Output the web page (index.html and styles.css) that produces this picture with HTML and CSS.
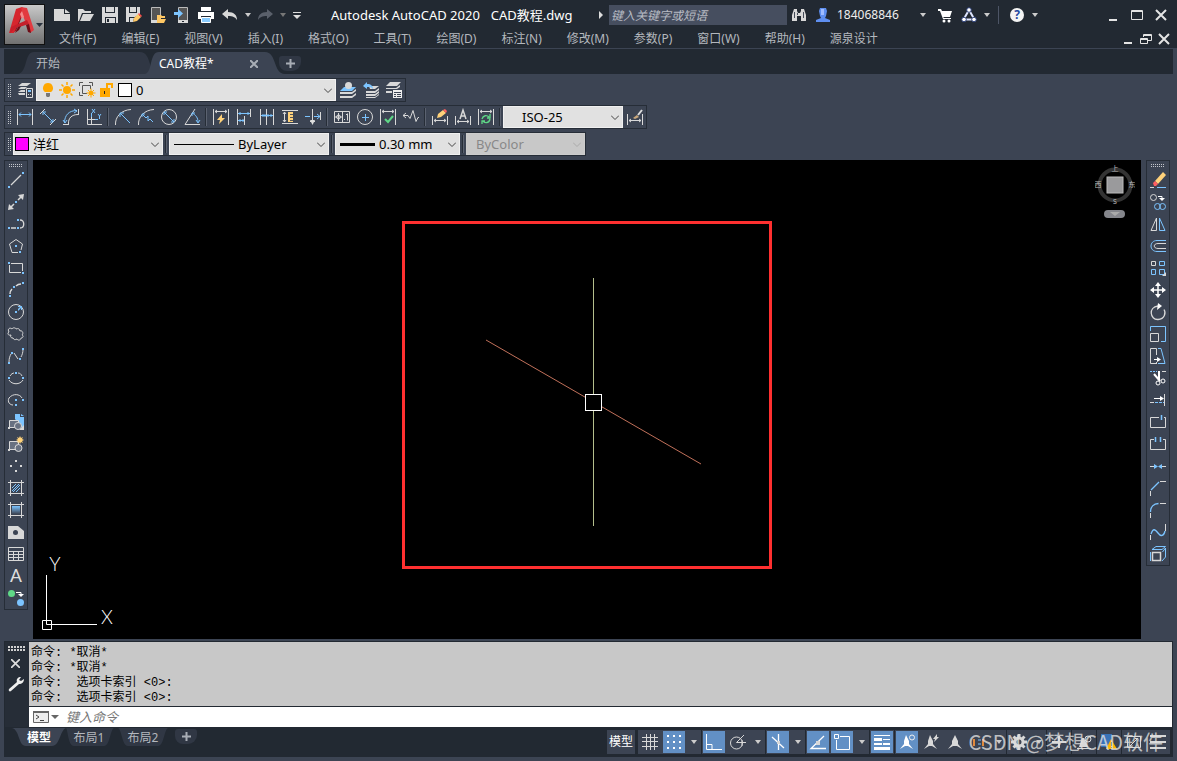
FILE: index.html
```
<!DOCTYPE html>
<html lang="zh-CN">
<head>
  <meta charset="UTF-8">
  <meta name="viewport" content="width=device-width, initial-scale=1">
  <title>Autodesk AutoCAD 2020 CAD教程.dwg</title>
  <link rel="stylesheet" href="styles.css">
</head>
<body>
  <header class="app-header">
    <button class="app-button" aria-label="应用程序菜单">
      <svg width="39" height="39" viewBox="0 0 39 39">
        <path fill="#8d1420" d="M13 5l8-1 3 12-6-7-7 17-4 2z"/>
        <path fill="#d6262e" d="M11 4l6-2 3 3-5 9-6 14-5 0z"/>
        <path fill="#e23a40" d="M16 2l6 1 7 22-4 3-7-17z"/>
        <path fill="#f4898b" d="M15 9l2-3 2 6-2 2z"/>
        <path fill="#c51f2a" d="M6 22l16-7 2 4-13 4-6 5z"/>
        <path fill="#6d0d16" d="M10 28l3-6 3-1-2 4zM21 20l3-1 2 9-3-1z"/>
        <path fill="#2c3440" d="M31 18h7l-3.500 4z"/>
      </svg>
    </button>

    <div class="title-row">
      <div class="quick-access">
        <button aria-label="新建"><svg class="ic solid" viewBox="0 0 16 16"><path d="M0 2h10v5h6v7H0z"/><path d="M11 2l5 4h-5z"/></svg></button>
        <button aria-label="打开"><svg class="ic solid" viewBox="0 0 16 16"><path d="M0 2h5l2 2h6v2H4L1 14H0z"/><path d="M5 7h11l-4 7H2z"/></svg></button>
        <button aria-label="保存"><svg class="ic solid" viewBox="0 0 16 16"><path d="M0 0h3v6h10V0h3v16h-2v-6H3v6H0z"/><path d="M4 0h8v5H4zM4 11h9v5H4z"/><path fill="#222932" d="M5 12h2v3H5z"/></svg></button>
        <button aria-label="另存为"><svg class="ic solid" viewBox="0 0 16 16"><path d="M0 0h3v6h8V0h3v7l-5 3H3v5H0z"/><path d="M4 0h6v5H4zM4 11h4l-1 4H4z"/><path fill="#ffc864" d="M7 15l1-4 4-4 3 3-4 4z"/><path fill="#ff4d4d" d="M12 7l1-1 3 3-1 1z"/></svg></button>
        <button aria-label="从移动设备打开"><svg class="ic solid" viewBox="0 0 16 16"><path fill="#555" stroke="#bbb" d="M1.500.5h9v15h-9z"/><path d="M1 13h7v3H1z"/><path fill="#ffc864" d="M7 8h4l1 1h3v2h-4l-2 5H7zM10 12h6l-2 4H8z"/></svg></button>
        <button aria-label="保存到移动设备"><svg class="ic solid" viewBox="0 0 16 16"><path fill="#555" stroke="#bbb" d="M4.500.5h9v15h-9z"/><path d="M4 13h10v3H4z"/><path fill="#222932" d="M8 14h2v1H8z"/><path fill="#7cc4ff" d="M0 5h4V2l5 4.500L4 11V8H0z"/></svg></button>
        <button aria-label="打印"><svg class="ic solid" viewBox="0 0 16 16"><path fill="#fff" d="M3 0h10v4H3zM0 5h16v7h-3V9H3v3H0z"/><path fill="#8accff" stroke="#fff" d="M3.500 10.500h9v5h-9z"/></svg></button>
        <button aria-label="放弃"><svg class="ic solid" viewBox="0 0 16 16"><path d="M0 7l6-5v3c6 0 9 3 9 8-2-3-4-4-9-4v3z"/></svg></button>
        <button class="drop" aria-label="放弃列表"><svg class="caret" viewBox="0 0 6 4"><path d="M0 0h6L3 4z"/></svg></button>
        <button aria-label="重做"><svg class="ic solid off" viewBox="0 0 16 16"><path d="M16 7l-6-5v3c-6 0-9 3-9 8 2-3 4-4 9-4v3z"/></svg></button>
        <button class="drop" aria-label="重做列表"><svg class="caret off" viewBox="0 0 6 4"><path d="M0 0h6L3 4z"/></svg></button>
        <button class="more" aria-label="自定义快速访问工具栏"><svg width="8" height="7" viewBox="0 0 8 7"><path fill="#ddd" d="M0 0h8v1H0zM0 3h8L4 7z"/></svg></button>
      </div>
      <h1 class="title"><span>Autodesk AutoCAD 2020</span><span>CAD教程.dwg</span></h1>
      <svg class="arrow" viewBox="0 0 4 8"><path d="M0 0l4 4-4 4z"/></svg>
      <input class="search" type="text" placeholder="键入关键字或短语" aria-label="搜索">
      <div class="account">
        <button aria-label="搜索"><svg class="ic solid" viewBox="0 0 16 16"><path d="M3 2h3v2l1 2h2l1-2V2h3l2 6v6h-5V9H6v5H1V8z"/><path fill="#444b58" d="M3 5h1v6H3zM12 5h1v6h-1zM6 6h1v2H6z"/></svg></button>
        <button aria-label="登录"><svg class="ic solid" viewBox="0 0 16 16"><path fill="#5f8ff0" d="M5 1h6l1 3-1 5-1 2 5 2v2H1v-2l5-2-1-2-1-5z"/><path fill="#9fbcff" d="M6 2h3v6H6z"/></svg></button>
        <span class="user">184068846</span>
        <button class="drop" aria-label="帐户"><svg class="caret" viewBox="0 0 6 4"><path d="M0 0h6L3 4z"/></svg></button>
        <button class="cart" aria-label="商店"><svg class="ic solid" viewBox="0 0 16 16"><path fill="#fff" d="M1 2h3l1 2h10l-2 6H6l1 1h7v1H6L3 4H1z"/><circle fill="#fff" cx="7" cy="14" r="1.500"/><circle fill="#fff" cx="12" cy="14" r="1.500"/></svg></button>
        <button aria-label="Autodesk App"><svg class="ic" viewBox="0 0 16 16"><path stroke="#dfe6ff" stroke-width="2" d="M8 3L2.500 12.500h11z"/><circle fill="#fff" stroke="#2b3e78" cx="8" cy="3" r="2.300"/><circle fill="#fff" stroke="#2b3e78" cx="3" cy="12.500" r="2.300"/><circle fill="#fff" stroke="#2b3e78" cx="13" cy="12.500" r="2.300"/></svg></button>
        <button class="drop" aria-label="应用列表"><svg class="caret" viewBox="0 0 6 4"><path d="M0 0h6L3 4z"/></svg></button>
        <span class="divider"></span>
        <button class="help" aria-label="帮助">?</button>
        <button class="drop" aria-label="帮助列表"><svg class="caret" viewBox="0 0 6 4"><path d="M0 0h6L3 4z"/></svg></button>
      </div>
      <div class="window-buttons">
        <button aria-label="最小化"><svg class="ic" viewBox="0 0 16 16"><path stroke-width="2" d="M4 13h8"/></svg></button>
        <button aria-label="最大化"><svg class="ic" viewBox="0 0 16 16"><path d="M2.500 3.500h11v9h-11z"/><path d="M2 4.500h12"/></svg></button>
        <button aria-label="关闭"><svg class="ic" viewBox="0 0 16 16"><path stroke-width="2" d="M3 3l10 10M13 3L3 13"/></svg></button>
      </div>
    </div>

    <div class="menu-row">
      <nav class="menus">
        <a href="#">文件(F)</a>
        <a href="#">编辑(E)</a>
        <a href="#">视图(V)</a>
        <a href="#">插入(I)</a>
        <a href="#">格式(O)</a>
        <a href="#">工具(T)</a>
        <a href="#">绘图(D)</a>
        <a href="#">标注(N)</a>
        <a href="#">修改(M)</a>
        <a href="#">参数(P)</a>
        <a href="#">窗口(W)</a>
        <a href="#">帮助(H)</a>
        <a href="#">源泉设计</a>
      </nav>
      <div class="window-buttons small">
        <button aria-label="最小化文档"><svg class="ic" viewBox="0 0 16 16"><path stroke-width="2" d="M4 12h8"/></svg></button>
        <button aria-label="还原文档"><svg class="ic" viewBox="0 0 16 16"><path d="M5.500 6V3.500h8v6H10M5 4.500h8"/><path d="M2.500 7.500h7v5h-7zM2 8.500h8"/></svg></button>
        <button aria-label="关闭文档"><svg class="ic" viewBox="0 0 16 16"><path stroke-width="2" d="M3 3l10 10M13 3L3 13"/></svg></button>
      </div>
    </div>
  </header>

  <nav class="file-tabs">
    <a class="file-tab" href="#">
      <svg viewBox="0 0 140 22" preserveAspectRatio="none"><path d="M0 22C10 20 6 0 16 0H122C134 0 130 22 140 22z"/></svg>
      <span>开始</span>
    </a>
    <a class="file-tab active" href="#">
      <svg viewBox="0 0 140 22" preserveAspectRatio="none"><path d="M0 22C8 20 4 0 14 0H120C132 0 128 22 140 22z"/></svg>
      <span>CAD教程*</span>
      <svg class="tab-close" viewBox="0 0 8 8"><path d="M0 0l8 8M8 0L0 8"/></svg>
    </a>
    <button class="tab-add" aria-label="新图形"><svg viewBox="0 0 9 9"><path d="M4.500 0v9M0 4.500h9"/></svg></button>
  </nav>

  <div class="toolbars">
    <div class="toolbar">
      <span class="grip"></span>
      <button aria-label="图层特性"><svg class="ic solid" viewBox="0 0 16 16"><path d="M5 1h9l-4 3H1zM4 5h6l-2 2H1zM4 8h4v2H1z M1 11h7v2H2z"/><path fill="#3c4453" stroke="#ddd" d="M9.500 6.500h6v9h-6z"/><path fill="#7cc4ff" d="M11 8h3v2h-3z"/><path d="M11 12h1v1h-1zM13 12h1v1h-1z"/></svg></button>
      <div class="combo layer">
        <svg class="ic solid" viewBox="0 0 16 16"><path fill="#ffa800" d="M8 1a5 5 0 0 1 3 9H5a5 5 0 0 1 3-9z"/><path fill="#777" d="M6 11h4v3l-1 1H7l-1-1z"/></svg>
        <svg class="ic" viewBox="0 0 16 16"><circle fill="#ffa800" stroke="none" cx="8" cy="8" r="4"/><path stroke="#ffa800" stroke-width="1.500" d="M8 0v3M8 13v3M0 8h3M13 8h3M2.500 2.500l2 2M11.500 11.500l2 2M2.500 13.500l2-2M11.500 4.500l2-2"/></svg>
        <svg class="ic wide" viewBox="0 0 18 16"><path stroke="#555" d="M1.500 4V.5H5M11 .5h3.500V4M1.500 10v3.500H5M4.500 3.500h8v8h-8z"/><circle fill="#e1e1e1" stroke="none" cx="13" cy="11" r="4"/><circle fill="#ffa800" stroke="none" cx="13" cy="11" r="2.500"/><path stroke="#ffa800" d="M13 6.500v2M13 13.500v2M8.500 11h2M15.500 11h2M10 8l1 1M15 13l1 1M10 14l1-1M15 9l1-1"/></svg>
        <svg class="ic" viewBox="0 0 16 16"><path fill="#ffa800" stroke="none" d="M1 6h10v9H1z"/><path stroke="#ffa800" stroke-width="2" d="M8 7V2h5v4"/><path fill="#222" stroke="none" d="M5 9h1v3H5z"/></svg>
        <span class="swatch white"></span>
        <select aria-label="图层"><option>0</option></select>
        <svg class="chevron" viewBox="0 0 8 5"><path d="M0 .5l4 4 4-4"/></svg>
      </div>
      <button aria-label="将对象的图层置为当前"><svg class="ic solid" viewBox="0 0 16 16"><path fill="#7cc4ff" d="M4 5h12l-4 4H0z"/><circle cx="8.500" cy="3.500" r="3.500"/><path d="M0 10h12l4-3v2l-4 3H0zM0 14h12l4-3v2l-4 3H0z"/></svg></button>
      <button aria-label="上一个图层"><svg class="ic solid" viewBox="0 0 16 16"><path d="M6 4h10l-4 3H7zM3 9h9l4-3v2l-4 3H3zM3 12h9l4-3v2l-4 3H3zM3 15h9l4-3v1l-4 3H3z"/><path fill="#7cc4ff" d="M0 4l4-4v2c4 0 6 2 6 5-2-2-3-2-6-2v2z"/></svg></button>
      <button aria-label="图层状态管理器"><svg class="ic solid" viewBox="0 0 16 16"><path d="M4 0h11l-4 4H0zM0 6h10l4-3v2l-3 2H0zM0 9h6v2H0z"/><path fill="#eee" d="M7 8h9v8H7z"/><path fill="#3c4453" d="M8 10h7v1H8zM8 12h2v1H8zM11 12h4v1h-4zM8 14h2v1H8zM11 14h4v1h-4z"/></svg></button>
    </div>

    <div class="toolbar">
      <span class="grip"></span>
      <button aria-label="线性"><svg class="ic" viewBox="0 0 16 16"><path d="M.5 0v16M15.500 0v16"/><path class="b" d="M2 5.500h12M4 3.500l-2 2 2 2M12 3.500l2 2-2 2"/></svg></button>
      <button aria-label="对齐"><svg class="ic" viewBox="0 0 16 16"><path d="M0 5l5-5M10 16l6-6"/><path class="b" d="M3 3l10 10M3 6V3h3M13 10v3h-3"/></svg></button>
      <button aria-label="弧长"><svg class="ic" viewBox="0 0 16 16"><path d="M0 15.500h6M15.500 0v6M5.500 15C5 9 9 5.500 15 5.500"/><path class="b" d="M1.500 14C1.500 6 6 1.500 14 1.500M0 11l2 3 2-3M11 0l3 2-3 2"/></svg></button>
      <button aria-label="坐标"><svg class="ic" viewBox="0 0 16 16"><path d="M1.500 0v15.500H16M5.500 5v11M1 10.500h8"/><path class="b" d="M6 0l3 4M9 0L6 4M12 5l1.500 2L15 5M13.500 7v3M9 10.500h3M5.500 4v4"/></svg></button>
      <span class="sep"></span>
      <button aria-label="半径"><svg class="ic" viewBox="0 0 16 16"><path d="M.5 16C0 8 6 1 16 .5"/><path class="b" d="M5 4l10 10M5 8V4h4"/></svg></button>
      <button aria-label="折弯"><svg class="ic" viewBox="0 0 16 16"><path d="M.5 16C0 8 6 1 16 .5"/><path class="b" d="M4 5l4 4 2-2 0 5 2-2 3 3M4 8V5h3"/></svg></button>
      <button aria-label="直径"><svg class="ic" viewBox="0 0 16 16"><circle cx="8" cy="8" r="7.500"/><path class="b" d="M3 3l10 10M3 6V3h3M13 10v3h-3"/></svg></button>
      <button aria-label="角度"><svg class="ic" viewBox="0 0 16 16"><path d="M16 15.500H1L11 0"/><path class="b" d="M8 4c4 2 6 5 6 9M8 7V4h3M12 11l2 3 2-3"/></svg></button>
      <span class="sep"></span>
      <button aria-label="快速标注"><svg class="ic" viewBox="0 0 16 16"><path d="M.5 0v16M15.500 0v16M2 2.500h12M4 1L2 2.500 4 4M12 1l2 1.500L12 4"/><path fill="#ffd27a" stroke="none" d="M9 5L4 11h3l-1 4 6-6H9z"/></svg></button>
      <button aria-label="基线"><svg class="ic" viewBox="0 0 16 16"><path d="M1.500 0v16M8.500 7v9M14.500 0v8"/><path class="b" d="M2 4.500h12M12 3v3M4 3v3M2 11.500h6M4 10v3M7 10v3"/></svg></button>
      <button aria-label="连续"><svg class="ic" viewBox="0 0 16 16"><path d="M1.500 0v16M7.500 0v16M14.500 0v16"/><path class="b" d="M2 6.500h12M4 5v3M6 5v3M9 5v3M12 5v3"/></svg></button>
      <button aria-label="等距标注"><svg class="ic" viewBox="0 0 16 16"><path d="M0 1.500h16M0 14.500h16M2.500 3v10M1 5l1.500-2L4 5M1 11l1.500 2L4 11"/><path fill="#ffd27a" stroke="none" d="M6 3h5v10H6z"/><path stroke="#555" d="M8 5.500h3M8 8.500h3M8 11.500h3"/></svg></button>
      <button aria-label="折断标注"><svg class="ic" viewBox="0 0 16 16"><path d="M7.500 0v14M15.500 3v8M5 12.500h5"/><path class="b" d="M0 7.500h5M9 7.500h6M12 5l3 2.500-3 2.500"/><path fill="#ddd" stroke="none" d="M5 11h5l-2.500 5z"/></svg></button>
      <span class="sep"></span>
      <button aria-label="公差"><svg class="ic" viewBox="0 0 16 16"><path d="M.5 2.500h15v11H.5zM8.500 3v10M1 8h7M4.500 4v8M10 10.500h1M13.500 4.500v7M12 5.500h1"/><circle cx="4.500" cy="8" r="2"/></svg></button>
      <button aria-label="圆心标记"><svg class="ic" viewBox="0 0 16 16"><circle cx="8" cy="8" r="7.500"/><path class="b" d="M8.500 5v7M5 8.500h7"/></svg></button>
      <button aria-label="检验"><svg class="ic" viewBox="0 0 16 16"><path d="M.5 0v16M15.500 0v16M2 2.500h12M4 1L2 2.500 4 4M12 1l2 1.500L12 4"/><path stroke="#5fd887" stroke-width="2" d="M5 10l3 3 5-6"/></svg></button>
      <button aria-label="折弯线性"><svg class="ic" viewBox="0 0 16 16"><path d="M0 6.500h5l2 3 3-8 3 11 2-4h1M3 4L0 6.500 3 9"/></svg></button>
      <span class="sep"></span>
      <button aria-label="编辑标注"><svg class="ic" viewBox="0 0 16 16"><path d="M.5 7v9M15.500 7v9M2 11.500h12M4 10l-2 1.500L4 13M12 10l2 1.500-2 1.500"/><path fill="#ffd27a" stroke="none" d="M5 9l1-4 5-4 3 3-5 4z"/><path fill="#ff6060" stroke="none" d="M11 1l2-1 2 2-1 2z"/></svg></button>
      <button aria-label="编辑标注文字"><svg class="ic" viewBox="0 0 16 16"><path d="M.5 7v9M15.500 7v9M2 12.500h12M4 11l-2 1.500L4 14M12 11l2 1.500-2 1.500"/><path stroke-width="1.500" d="M5 10l3-9 3 9M6 7h4"/></svg></button>
      <button aria-label="标注更新"><svg class="ic" viewBox="0 0 16 16"><path d="M.5 0v16M15.500 0v16M2 2.500h12M4 1L2 2.500 4 4M12 1l2 1.500L12 4"/><path stroke="#5fd887" stroke-width="1.300" d="M4 10c1-4 5-4 7-2M12 10c-1 5-6 4-7 2M12 5v4H9M4 15v-3h3"/></svg></button>
      <span class="sep"></span>
      <div class="combo style">
        <select aria-label="标注样式"><option>ISO-25</option></select>
        <svg class="chevron" viewBox="0 0 8 5"><path d="M0 .5l4 4 4-4"/></svg>
      </div>
      <button aria-label="标注样式管理器"><svg class="ic" viewBox="0 0 16 16"><path d="M.5 5v11M15.500 5v11M2 11.500h12M4 10l-2 1.500L4 13M12 10l2 1.500-2 1.500"/><path fill="#c9a77c" stroke="none" d="M6 9l4-3 2 2-4 2z"/><path stroke="#ddd" stroke-width="2" d="M11 6l4-5"/></svg></button>
    </div>

    <div class="toolbar">
      <span class="grip"></span>
      <div class="combo color">
        <span class="swatch magenta"></span>
        <select aria-label="颜色"><option>洋红</option></select>
        <svg class="chevron" viewBox="0 0 8 5"><path d="M0 .5l4 4 4-4"/></svg>
      </div>
      <span class="sep"></span>
      <div class="combo linetype">
        <span class="line"></span>
        <select aria-label="线型"><option>ByLayer</option></select>
        <svg class="chevron" viewBox="0 0 8 5"><path d="M0 .5l4 4 4-4"/></svg>
      </div>
      <span class="sep"></span>
      <div class="combo weight">
        <span class="line thick"></span>
        <select aria-label="线宽"><option>0.30 mm</option></select>
        <svg class="chevron" viewBox="0 0 8 5"><path d="M0 .5l4 4 4-4"/></svg>
      </div>
      <span class="sep"></span>
      <div class="combo plot disabled">
        <select aria-label="打印样式" disabled><option>ByColor</option></select>
        <svg class="chevron" viewBox="0 0 8 5"><path d="M0 .5l4 4 4-4"/></svg>
      </div>
    </div>
  </div>

  <main class="workspace">
    <div class="palette">
      <span class="grip"></span>
      <button aria-label="直线"><svg class="ic" viewBox="0 0 16 16"><path stroke-width="1.300" d="M3 13L13 3"/><path class="n" d="M0 14h2v2H0zM14 0h2v2h-2z"/></svg></button>
      <button aria-label="构造线"><svg class="ic" viewBox="0 0 16 16"><path stroke-width="1.500" d="M3 13l3-3M10 6l3-3"/><path class="s" d="M0 16l1-6 5 5zM16 0l-6 1 5 5z"/><path class="n" d="M7 7h2v2H7z"/></svg></button>
      <button aria-label="多段线"><svg class="ic" viewBox="0 0 16 16"><path stroke-width="1.300" d="M3 12h5M12 12c5 0 5-8 0-8"/><path class="n" d="M0 11h2v2H0zM9 11h2v2H9zM9 3h2v2H9z"/></svg></button>
      <button aria-label="多边形"><svg class="ic" viewBox="0 0 16 16"><path d="M10 14.500H4L1.500 6 8 1.500 14.500 6 13 12"/><path class="n" d="M7 7h2v2H7zM11 13h2v2h-2z"/></svg></button>
      <button aria-label="矩形"><svg class="ic" viewBox="0 0 16 16"><path d="M3 3.500h11.500V11M1.500 5v7.500H13"/><path class="n" d="M0 2h2v2H0zM14 12h2v2h-2z"/></svg></button>
      <button aria-label="圆弧"><svg class="ic" viewBox="0 0 16 16"><path stroke-width="1.500" d="M2 12c0-2 1-4 2-5M8 4c2-2 3-2 5-2"/><path class="n" d="M1 13h2v2H1zM5 4h2v2H5zM14 0h2v2h-2z"/></svg></button>
      <button aria-label="圆"><svg class="ic" viewBox="0 0 16 16"><circle cx="8" cy="8" r="7.500"/><path class="n" d="M7 7h2v2H7zM10 2h4v4h-1V4l-3 3v-2l2-2h-2z"/></svg></button>
      <button aria-label="修订云线"><svg class="ic" viewBox="0 0 16 16"><path d="M3 9C0 10-1 7 1 6-1 3 2 1 4 3c1-2 4-1 4 0 2-1 4 0 4 2 2-1 4 2 2 4 2 1 1 3-1 3 0 2-3 3-4 1-2 1-3 1-4-1-2 0-3-1-2-3z"/></svg></button>
      <button aria-label="样条曲线"><svg class="ic" viewBox="0 0 16 16"><path d="M1 14c0-4 1-6 2-8M6 5l4 6M13 9c1-2 2-4 2-8"/><path class="n" d="M0 14h2v2H0zM3 4h2v2H3zM11 10h2v2h-2zM14 0h2v2h-2z"/></svg></button>
      <button aria-label="椭圆"><svg class="ic" viewBox="0 0 16 16"><path d="M2 6c1-2 3-3 4-3M10 3c2 0 3 1 4 3M1 10c3 5 11 5 14 0"/><path class="n" d="M0 7h2v2H0zM7 2h2v2H7zM14 7h2v2h-2z"/></svg></button>
      <button aria-label="椭圆弧"><svg class="ic" viewBox="0 0 16 16"><path d="M14 6C12 2 5 1 1 6c-2 4 1 7 4 7"/><path class="n" d="M7 7h2v2H7zM14 7h2v2h-2zM7 12h2v2H7z"/></svg></button>
      <button aria-label="插入块"><svg class="ic" viewBox="0 0 16 16"><path class="n" d="M7 0h5v3h4v11h-2L7 5z"/><path class="n" d="M13 0l3 2h-3z"/><path fill="#687181" d="M1.500 6.500h9v7h-9z"/><circle fill="#687181" cx="10" cy="12" r="3.500"/><path class="s" d="M0 13h2v2H0zM16 11v5h-5z"/></svg></button>
      <button aria-label="创建块"><svg class="ic" viewBox="0 0 16 16"><path fill="#687181" d="M1.500 5.500h9v8h-9z"/><circle fill="#687181" cx="10.500" cy="12" r="3.500"/><path class="s" d="M0 13h2v2H0z"/><path fill="#ffd27a" stroke="none" d="M12 0l1 2 2-1-1 2 2 1-2 1 1 2-2-1-1 2-1-2-2 1 1-2-2-1 2-1-1-2 2 1z"/></svg></button>
      <button aria-label="点"><svg class="ic" viewBox="0 0 16 16"><path class="s" d="M7 2h2v2H7zM2 7h2v2H2zM12 7h2v2h-2zM7 12h2v2H7z"/></svg></button>
      <button aria-label="图案填充"><svg class="ic" viewBox="0 0 16 16"><path class="b" d="M4 8l4-4M4 11l7-7M5 12l7-7M8 12l4-4"/><path d="M0 2.500h16M0 13.500h16M2.500 0v16M13.500 0v16"/></svg></button>
      <button aria-label="渐变色"><svg class="ic" viewBox="0 0 16 16"><linearGradient id="fill" x2="0" y2="1"><stop stop-color="#7cc4ff"/><stop offset="1" stop-color="#3c4453"/></linearGradient><path fill="url(#fill)" stroke="none" d="M4 4h8v8H4z"/><path d="M0 2.500h16M0 13.500h16M2.500 0v16M13.500 0v16"/></svg></button>
      <button aria-label="面域"><svg class="ic" viewBox="0 0 16 16"><path class="s" d="M0 2h10l6 5v8H0z"/><circle fill="#3c4453" stroke="none" cx="7.500" cy="8.500" r="2.500"/></svg></button>
      <button aria-label="表格"><svg class="ic" viewBox="0 0 16 16"><path d="M.5 1.500h15v13H.5zM0 5.500h16M0 8.500h16M0 11.500h16M5.500 5v9M10.500 5v9"/></svg></button>
      <button class="mtext" aria-label="多行文字">A</button>
      <button aria-label="添加选定对象"><svg class="ic" viewBox="0 0 16 16"><circle fill="#5fd887" stroke="none" cx="3.500" cy="3.500" r="3.500"/><circle fill="#7cc4ff" stroke="none" cx="12.500" cy="12.500" r="3.500"/><path stroke="#fff" d="M8 2.500h5V5"/><path fill="#fff" stroke="none" d="M10 4h6l-3 3z"/></svg></button>
    </div>

    <div class="canvas">
      <!-- model space: selection frame, line and cursor -->
      <svg class="drawing" width="370" height="348" viewBox="0 0 370 348">
        <rect x="1.500" y="1.500" width="367" height="345" stroke="#ff3030" stroke-width="3"/>
        <path stroke="#c0705a" d="M84 119L299 243"/>
        <path stroke="#b4be8c" d="M191.500 57v116M191.500 190v115"/>
        <rect x="183.500" y="173.500" width="16" height="16" fill="#000" stroke="#fff"/>
      </svg>
      <svg class="ucs" width="80" height="90" viewBox="0 0 80 90">
        <path d="M6.500 26v49.500H57M2.500 71.500h9v9h-9z"/>
        <text x="15" y="22">Y</text>
        <text x="67" y="75">X</text>
      </svg>
      <svg class="viewcube" width="40" height="58" viewBox="0 0 40 58">
        <circle cx="20" cy="21" r="15.500" fill="none" stroke="#333" stroke-width="4"/>
        <rect x="12" y="13" width="16" height="16" fill="#9a9a9c" stroke="#bbb"/>
        <g fill="#bbb"><text x="20" y="7">上</text><text x="3" y="23">西</text><text x="37" y="23">东</text><text x="20" y="40">S</text></g>
        <rect x="9" y="46" width="21" height="8" rx="4" fill="#85868c"/>
        <path fill="#aaa" d="M15 48h10l-5 4z"/>
      </svg>
    </div>

    <div class="palette">
      <span class="grip"></span>
      <button aria-label="删除"><svg class="ic" viewBox="0 0 16 16"><path fill="#ffd27a" stroke="none" d="M5 9l8-9 3 3-8 9z"/><path fill="#ff5f62" stroke="none" d="M3 11l2-2 3 3-2 2H4z"/><path d="M0 15.500h4"/><path class="b" d="M7 15.500h9"/></svg></button>
      <button aria-label="复制"><svg class="ic" viewBox="0 0 16 16"><circle cx="3.500" cy="3.500" r="3"/><path stroke="#fff" d="M8 2.500h4V5"/><path fill="#fff" stroke="none" d="M9 4h6l-3 3z"/><circle class="b" cx="7.500" cy="12.500" r="3"/><circle class="b" cx="12.500" cy="12.500" r="3"/></svg></button>
      <button aria-label="镜像"><svg class="ic" viewBox="0 0 16 16"><path d="M6.500 2v12.500H1z"/><path class="b" d="M9.500 2v12.500H15z"/></svg></button>
      <button aria-label="偏移"><svg class="ic" viewBox="0 0 16 16"><path class="b" d="M16 2.500H7c-8 0-8 11 0 11h9"/><path d="M16 5.500H8c-5 0-5 5 0 5h8"/></svg></button>
      <button aria-label="阵列"><svg class="ic" viewBox="0 0 16 16"><path d="M1.500 1.500h4v4h-4z"/><path class="b" d="M9.500 1.500h5v4h-5zM1.500 9.500h4v5h-4zM9.500 9.500h5v5h-5z"/><path class="s" d="M16 12v4h-4z"/></svg></button>
      <button aria-label="移动"><svg class="ic" viewBox="0 0 16 16"><path stroke="#fff" stroke-width="1.500" d="M8 2v12M2 8h12"/><path fill="#fff" stroke="none" d="M8 0l3 4H5zM8 16l3-4H5zM0 8l4-3v6zM16 8l-4-3v6z"/></svg></button>
      <button aria-label="旋转"><svg class="ic" viewBox="0 0 16 16"><path stroke-width="1.300" d="M8 2C-2 3 0 16 8 15.500c7-.5 8-7 6-10"/><path fill="#fff" stroke="none" d="M8-1l4 3-5 4z"/></svg></button>
      <button aria-label="缩放"><svg class="ic" viewBox="0 0 16 16"><path class="b" d="M.5 5V.5h15v15H11"/><path d="M.5 7.500h8v8h-8z"/></svg></button>
      <button aria-label="拉伸"><svg class="ic" viewBox="0 0 16 16"><path d="M6 15.500H.5V.5h6V7M6.500 14v2"/><path class="b" d="M8 .5h3l4 15H8"/><path stroke="#fff" d="M4 11.500h4"/><path fill="#fff" stroke="none" d="M7 9l4 2.500L7 14z"/></svg></button>
      <button aria-label="修剪"><svg class="ic" viewBox="0 0 16 16"><path d="M12 1.500h4"/><path class="b" stroke-dasharray="2 1" d="M0 1.500h7"/><path stroke="#fff" stroke-width="2" d="M9 1v9M4 4l6 7"/><circle stroke="#fff" cx="8" cy="13" r="2"/><circle stroke="#fff" cx="13" cy="11" r="2"/></svg></button>
      <button aria-label="延伸"><svg class="ic" viewBox="0 0 16 16"><path d="M14.500 2v12M0 10.500h4"/><path stroke="#fff" d="M4 6.500h7"/><path fill="#fff" stroke="none" d="M10 4l4 2.500L10 9z"/><path class="b" stroke-dasharray="3 1" d="M5 10.500h9"/></svg></button>
      <button aria-label="打断于点"><svg class="ic" viewBox="0 0 16 16"><path d="M9 3.500H.5v10h15v-10H14"/><path class="b" stroke-width="1.500" d="M11.500 1v5"/></svg></button>
      <button aria-label="打断"><svg class="ic" viewBox="0 0 16 16"><path d="M4 3.500H.5v10h15v-10H13"/><path class="b" stroke-width="1.500" d="M5.500 1v5M10.500 1v5"/></svg></button>
      <button aria-label="合并"><svg class="ic" viewBox="0 0 16 16"><path d="M0 8.500h5M11 8.500h5"/><path class="n" d="M4 6l4 2.500L4 11zM12 6L8 8.500l4 2.500z"/></svg></button>
      <button aria-label="倒角"><svg class="ic" viewBox="0 0 16 16"><path d="M.5 16v-5M10 1.500h6"/><path class="b" stroke-width="1.300" d="M1 10l8-8"/></svg></button>
      <button aria-label="圆角"><svg class="ic" viewBox="0 0 16 16"><path d="M.5 16v-5M10 1.500h6"/><path class="b" stroke-width="1.300" d="M.5 10c0-5 3-8.500 8-8.500"/></svg></button>
      <button aria-label="光顺曲线"><svg class="ic" viewBox="0 0 16 16"><path d="M.5 16v-5M15.500 0v7"/><path class="b" stroke-width="1.300" d="M1 10c2-6 4-5 7-1s6 3 7-2"/></svg></button>
      <button aria-label="分解"><svg class="ic" viewBox="0 0 16 16"><path class="b" d="M.5 15V6M2 3.500l4-3h9.500L12 3.500zM15.500 2v9L12 15M12.500 6l3-4"/><path stroke-width="1.500" d="M2.500 6.500h8v8h-8z"/></svg></button>
    </div>
  </main>

  <section class="command">
    <div class="command-side">
      <span class="grip"></span>
      <button aria-label="关闭命令行"><svg viewBox="0 0 8 8" width="9" height="9"><path stroke="#ddd" stroke-width="1.500" d="M0 0l8 8M8 0L0 8"/></svg></button>
      <button aria-label="自定义"><svg class="ic solid" viewBox="0 0 16 16"><path fill="#eee" d="M1 13l8-7c-1-3 1-5 4-5l-2 3 2 1 3-2c0 3-2 5-5 5l-8 7c-1 1-3 0-2-2z"/></svg></button>
    </div>
    <div class="command-main">
      <pre class="history">命令: *取消*
命令: *取消*
命令:  选项卡索引 &lt;0&gt;:
命令:  选项卡索引 &lt;0&gt;:</pre>
      <div class="prompt">
        <button aria-label="近期命令">
          <svg width="16" height="12" viewBox="0 0 16 12"><path fill="#eee" stroke="#666" d="M.5.5h15v11H.5z"/><path stroke="#666" stroke-width="2" d="M0 1h16"/><path stroke="#444" d="M3 4l3 2-3 2M7 9.500h4"/></svg>
          <svg width="8" height="4" viewBox="0 0 8 4"><path fill="#666" d="M0 0h8L4 4z"/></svg>
        </button>
        <input type="text" placeholder="键入命令" aria-label="命令">
      </div>
    </div>
  </section>

  <footer class="status-bar">
    <nav class="layouts">
      <a class="layout active" href="#"><svg viewBox="0 0 54 18" preserveAspectRatio="none"><path d="M0 0h54C48 2 48 18 40 18H14C6 18 8 2 0 0z"/></svg><span>模型</span></a>
      <a class="layout" href="#"><svg viewBox="0 0 54 18" preserveAspectRatio="none"><path d="M4 0h48C48 2 48 18 42 18H12C6 18 6 2 4 0z"/></svg><span>布局1</span></a>
      <a class="layout" href="#"><svg viewBox="0 0 54 18" preserveAspectRatio="none"><path d="M2 0h50C48 2 48 18 42 18H12C6 18 6 2 2 0z"/></svg><span>布局2</span></a>
      <button class="tab-add" aria-label="新建布局"><svg viewBox="0 0 9 9"><path d="M4.500 0v9M0 4.500h9"/></svg></button>
    </nav>
    <div class="toggles">
      <div class="group model"><button>模型</button></div>
      <div class="group">
        <button aria-label="栅格"><svg class="ic" viewBox="0 0 16 16"><path d="M4.500 0v16M8.500 0v16M12.500 0v16M0 3.500h16M0 7.500h16M0 12.500h16"/></svg></button>
        <button class="on" aria-label="捕捉"><svg class="ic" viewBox="0 0 16 16"><path stroke-width="2" stroke-dasharray="2 4" d="M1 2h14M1 8h14M1 14h14"/></svg></button>
        <button class="drop" aria-label="捕捉设置"><svg class="caret" viewBox="0 0 6 4"><path d="M0 0h6L3 4z"/></svg></button>
      </div>
      <div class="group">
        <button class="on" aria-label="正交"><svg class="ic" viewBox="0 0 16 16"><path d="M.5 0v15.500H16M1 10.500h5V15"/></svg></button>
        <button aria-label="极轴追踪"><svg class="ic" viewBox="0 0 16 16"><circle cx="6.500" cy="9" r="6"/><path d="M6.500 8.500H16M6.500 8.500L14 1M12 6v6"/></svg></button>
        <button class="drop" aria-label="极轴设置"><svg class="caret" viewBox="0 0 6 4"><path d="M0 0h6L3 4z"/></svg></button>
      </div>
      <div class="group">
        <button class="on" aria-label="等轴测草图"><svg class="ic" viewBox="0 0 16 16"><path stroke-width="1.300" d="M8.500 0v16M2 3l12 11"/><path class="s" d="M7 7h3v3H7z"/></svg></button>
        <button class="drop" aria-label="等轴测设置"><svg class="caret" viewBox="0 0 6 4"><path d="M0 0h6L3 4z"/></svg></button>
      </div>
      <div class="group">
        <button class="on" aria-label="对象捕捉追踪"><svg class="ic" viewBox="0 0 16 16"><path stroke-width="1.300" d="M14 2L1 14.500h15"/><path class="s" d="M6 7h4v4H6z"/></svg></button>
        <button class="on" aria-label="对象捕捉"><svg class="ic" viewBox="0 0 16 16"><path d="M6 2.500h9.500v13h-13V6M.5.5h4v4h-4z"/></svg></button>
        <button class="drop" aria-label="捕捉列表"><svg class="caret" viewBox="0 0 6 4"><path d="M0 0h6L3 4z"/></svg></button>
      </div>
      <div class="group">
        <button class="on" aria-label="线宽"><svg class="ic solid" viewBox="0 0 16 16"><path d="M0 1h16v1H0zM0 4h8v3H0zM9 5h7v1H9zM0 9h8v2H0zM9 9h7v2H9zM0 13h16v3H0z"/></svg></button>
      </div>
      <div class="group">
        <button class="on" aria-label="注释可见性"><svg class="ic solid" viewBox="0 0 16 16"><path d="M7 1l3 6v3l4 5-5-3H6l-5 3 4-5V7z"/><circle fill="none" stroke="#eee" cx="13" cy="3.500" r="2.500"/></svg></button>
        <button aria-label="自动缩放"><svg class="ic solid" viewBox="0 0 16 16"><path d="M7 1l3 6v3l4 5-5-3H6l-5 3 4-5V7zM14 0l-4 5h2l-1 3 5-5h-2z"/></svg></button>
        <button aria-label="注释比例"><svg class="ic solid" viewBox="0 0 16 16"><path d="M8 1l3 6v3l4 5-5-3H6l-5 3 4-5V7z"/></svg></button>
        <button aria-label="比例"><svg class="ic" viewBox="0 0 16 16"><path stroke="#e08a3c" stroke-width="2" d="M3 5v7M12 5v7"/><path stroke="#7cc4ff" d="M7 6h3M7 10h3"/></svg></button>
        <button class="drop" aria-label="比例列表"><svg class="caret" viewBox="0 0 6 4"><path d="M0 0h6L3 4z"/></svg></button>
      </div>
      <div class="group">
        <button aria-label="切换工作空间"><svg class="ic" viewBox="0 0 16 16"><circle stroke-width="3" cx="8" cy="8" r="4"/><path stroke-width="3" d="M8 0v3M8 13v3M0 8h3M13 8h3M2.500 2.500l2 2M11.500 11.500l2 2M2.500 13.500l2-2M11.500 4.500l2-2"/></svg></button>
        <button class="drop" aria-label="工作空间列表"><svg class="caret" viewBox="0 0 6 4"><path d="M0 0h6L3 4z"/></svg></button>
      </div>
      <div class="group"><button aria-label="注释监视器"><svg class="ic" viewBox="0 0 16 16"><path stroke-width="2" d="M8 2v12M1 8h14"/></svg></button></div>
      <div class="group"><button aria-label="隔离对象"><svg class="ic solid" viewBox="0 0 16 16"><path d="M1 14h14v1H1z"/><path d="M3 13l3-9h2l4 9z"/><circle fill="none" stroke="#ddd" cx="12" cy="5" r="3"/></svg></button></div>
      <div class="group"><button aria-label="硬件加速"><svg class="ic solid" viewBox="0 0 16 16"><path fill="#3973b8" d="M0 0h11v13H0z"/><path fill="#ffb400" d="M10 5l6 10H5z"/><path fill="#333" d="M10 8h1v4h-1zM10 13h1v1h-1z"/></svg></button></div>
      <div class="group last">
        <button aria-label="全屏显示"><svg class="ic" viewBox="0 0 16 16"><path d="M1.500 2.500h13v11h-13zM8 8l4-4M9 4.500h3v3M8 8l-4 4"/></svg></button>
        <button aria-label="自定义"><svg class="ic" viewBox="0 0 16 16"><path stroke-width="2" d="M0 2h16M0 8h16M0 14h16"/></svg></button>
      </div>
    </div>
    <div class="watermark">CSDN @梦想CAD软件</div>
  </footer>
</body>
</html>
```

FILE: styles.css
```
* {
  box-sizing: border-box;
}

body {
  margin: 0;
  height: 100vh;
  display: flex;
  flex-direction: column;
  background-color: #3c4453;
  color: #ddd;
  font-family: "Noto Sans", "Noto Sans CJK SC", sans-serif;
  font-size: 12px;
  line-height: 16px;
}

button, input, select {
  margin: 0;
  padding: 0;
  border: 0;
  border-radius: 0;
  background: none;
  color: inherit;
  font: inherit;
}
button {
  display: flex;
  align-items: center;
  justify-content: center;
}
a {
  color: inherit;
  text-decoration: none;
}
svg {
  display: block;
  flex: none;
  fill: none;
}

/* Icons */
.ic {
  width: 16px;
  height: 16px;
  stroke: #d8d8d8;
  overflow: visible;
}
.ic.wide {
  width: 18px;
}
.ic.solid {
  fill: #d8d8d8;
  stroke: none;
}
.ic.off {
  fill: #5a606b;
}
.ic .b {
  stroke: #7cc4ff;
}
.ic .n {
  fill: #7cc4ff;
  stroke: none;
}
.ic .s {
  fill: #d8d8d8;
  stroke: none;
}
.caret {
  width: 6px;
  height: 4px;
  fill: #ccc;
}
.caret.off {
  fill: #777;
}

/* Header */
.app-header {
  display: grid;
  grid-template-columns: 46px 1fr;
  grid-template-rows: 30px 18px;
  padding: 0 4px;
  background-color: #222932;
}
.app-button {
  grid-row: 1 / 3;
  align-self: center;
  width: 41px;
  height: 41px;
  border: 1px solid #111;
  background-image: linear-gradient(#c9c9c9, #707070);
}
.title-row, .menu-row {
  display: flex;
  align-items: center;
}
.quick-access, .account, .window-buttons {
  display: flex;
  align-items: center;
  height: 30px;
}
.title-row button {
  width: 24px;
  height: 24px;
}
.title-row .drop {
  width: 11px;
}
.title-row .more {
  width: 18px;
}
.title {
  flex: 0 1 268px;
  display: flex;
  gap: 11px;
  margin: 0 0 0 25px;
  color: #fff;
  font-size: 13px;
  font-weight: normal;
  white-space: nowrap;
}
.arrow {
  width: 4px;
  height: 8px;
  margin-right: 6px;
  fill: #ddd;
}
.search {
  flex: 0 1 178px;
  min-width: 60px;
  height: 20px;
  padding: 0 2px;
  background-color: #464e5f;
}
.search::placeholder {
  color: #b8bcc4;
  font-style: italic;
}
.user {
  width: 82px;
  padding-left: 2px;
  color: #eee;
}
.title-row .cart {
  margin-left: 5px;
}
.divider {
  width: 1px;
  height: 18px;
  margin: 0 6px;
  background-color: #4d5566;
}
.title-row .help {
  width: 14px;
  height: 14px;
  margin: 0 5px;
  border-radius: 50%;
  background-color: #f4f4f4;
  color: #2348a0;
  font-weight: bold;
}
.window-buttons {
  margin-left: auto;
}
.window-buttons .ic {
  stroke: #e4e4e4;
}
.window-buttons.small {
  height: 18px;
}
.small button {
  width: 18px;
}
.menus {
  display: flex;
  gap: 25px;
  padding-left: 9px;
  color: #b4b8be;
  white-space: nowrap;
}

/* File tabs */
.file-tabs {
  display: flex;
  align-items: flex-end;
  height: 25px;
  margin: 1px 4px 0;
  padding-left: 14px;
  background-color: #222932;
}
.file-tab {
  position: relative;
  display: flex;
  align-items: center;
  width: 140px;
  height: 22px;
  padding: 2px 27px 0 18px;
  color: #b4b8be;
}
.file-tab + .file-tab {
  margin-left: -13px;
  padding-left: 14px;
}
.file-tab > svg:first-child, .layout svg {
  position: absolute;
  left: 0;
  top: 0;
  width: 100%;
  height: 100%;
  fill: #303744;
}
.file-tab.active > svg:first-child, .layout.active svg {
  fill: #3c4453;
}
.file-tab span, .layout span {
  position: relative;
}
.file-tab.active {
  color: #fff;
}
.file-tab .tab-close {
  position: relative;
  width: 8px;
  height: 8px;
  margin-left: auto;
  stroke: #a8adb5;
  stroke-width: 2;
}
.tab-add {
  width: 22px;
  height: 15px;
  margin: 0 0 3px -6px;
  border-radius: 3px 3px 9px 8px;
  background-color: #303744;
}
.tab-add svg {
  width: 9px;
  height: 9px;
  stroke: #a8adb5;
  stroke-width: 2;
}

/* Toolbars */
.toolbars {
  display: flex;
  flex-direction: column;
  align-items: flex-start;
  gap: 3px;
  padding: 4px 4px 0;
}
.toolbar {
  display: flex;
  height: 24px;
  border: 1px solid #262d37;
}
.toolbar button {
  width: 23px;
}
.grip {
  flex: none;
  width: 4px;
  margin: 4px 2px;
  background-image:
    linear-gradient(#3c4453 50%, transparent 50%),
    linear-gradient(90deg, #3c4453 50%, #c4c7cc 50%);
  background-size: 2px 2px;
}
.sep {
  width: 2px;
  margin: 2px;
  background-color: #5b6270;
  border-left: 1px solid #262d37;
}
.combo {
  display: flex;
  align-items: center;
  padding: 0 3px;
  border: 1px solid #f0f0f0;
  background-color: #e1e1e1;
  color: #000;
  font-size: 13px;
}
.combo select {
  flex: 1;
  min-width: 0;
  height: 20px;
  appearance: none;
  padding-left: 4px;
}
.chevron {
  width: 8px;
  height: 5px;
  stroke: #444;
}
.layer {
  width: 300px;
}
.layer .ic {
  margin-right: 3px;
}
.style {
  width: 120px;
}
.style select {
  padding-left: 15px;
}
.color {
  width: 150px;
  padding-left: 1px;
}
.linetype {
  width: 160px;
}
.weight {
  width: 125px;
}
.plot {
  width: 119px;
}
.swatch {
  width: 14px;
  height: 14px;
  border: 1px solid #000;
}
.white {
  background-color: #fff;
}
.magenta {
  background-color: #f0f;
}
.line {
  width: 60px;
  height: 1px;
  margin-left: 1px;
  background-color: #000;
}
.line.thick {
  width: 35px;
  height: 3px;
}
.disabled {
  border-color: #ccc;
  background-color: #c8c8c8;
  color: #888;
}
.disabled select {
  opacity: 1;
  padding-left: 6px;
}
.disabled .chevron {
  stroke: #aaa;
}

/* Drawing area */
.workspace {
  flex: 1;
  display: flex;
  align-items: flex-start;
  gap: 5px;
  min-height: 0;
  margin: 0 7px 0 4px;
  padding-top: 4px;
}
.palette {
  width: 24px;
  border: 1px solid #262d37;
}
.palette .grip {
  display: block;
  width: 14px;
  height: 4px;
  margin: 2px 3px;
}
.palette button {
  width: 22px;
  height: 22px;
}
.palette .mtext {
  font-family: Roboto, sans-serif;
  font-size: 19px;
}
.canvas {
  position: relative;
  flex: 1;
  align-self: stretch;
  background-color: #000;
}
.drawing {
  position: absolute;
  left: calc(50% - 185px);
  top: 61px;
}
.ucs {
  position: absolute;
  left: 7px;
  bottom: 0;
  stroke: #fff;
}
.ucs text {
  fill: #fff;
  stroke: none;
  text-anchor: middle;
  font-family: Lato, sans-serif;
  font-size: 19px;
  font-weight: 300;
}
.viewcube {
  position: absolute;
  right: 6px;
  top: 4px;
  font-size: 7px;
  text-anchor: middle;
}

/* Command line */
.command {
  display: flex;
  margin: 2px 4px 0;
  border: 1px solid #222932;
  background-color: #262d37;
}
.command-side {
  display: flex;
  flex-direction: column;
  align-items: center;
  gap: 8px;
  width: 24px;
  padding-right: 3px;
}
.command-side .grip {
  width: 18px;
  height: 6px;
  margin: 3px 0 0;
  background-image:
    linear-gradient(#262d37 1px, transparent 1px),
    linear-gradient(90deg, #262d37 1px, #d0d0d0 1px);
  background-size: 3px 3px;
}
.command-side button:nth-of-type(1) {
  height: 9px;
}
.command-main {
  flex: 1;
}
.history {
  margin: 0;
  padding: 4px 2px 0;
  background-color: #c8c8c8;
  color: #000;
  font-family: "Liberation Mono", "Noto Sans CJK SC", monospace;
  font-size: 12px;
  line-height: 15px;
}
.prompt {
  display: flex;
  height: 21px;
  border-top: 1px solid #222932;
  background-color: #fff;
}
.prompt button {
  gap: 2px;
  padding: 0 4px;
}
.prompt input {
  flex: 1;
  padding-left: 3px;
  color: #000;
  font-size: 13px;
}
.prompt input::placeholder {
  color: #777;
  font-style: italic;
}

/* Status bar */
.status-bar {
  position: relative;
  display: flex;
  justify-content: space-between;
  height: 29px;
  margin: 0 4px 4px;
  background-color: #222932;
}
.layouts {
  display: flex;
  align-items: flex-start;
  padding-left: 8px;
}
.layout {
  position: relative;
  display: flex;
  justify-content: center;
  width: 54px;
  height: 18px;
  color: #b4b8be;
  line-height: 20px;
}
.layout.active {
  z-index: 1;
  margin-right: -4px;
  color: #fff;
  font-weight: bold;
}
.layouts .tab-add {
  margin: 1px 0 0 5px;
}
.toggles {
  display: flex;
  gap: 1px;
  padding: 2px 3px 3px 0;
}
.group {
  display: flex;
  background-color: #3c4453;
}
.group button {
  width: 24px;
  height: 24px;
}
.group .drop {
  width: 15px;
}
.group.model {
  margin-right: 2px;
}
.model button {
  width: 28px;
  color: #fff;
}
.group .on {
  border: 1px solid #3c4453;
  background-color: #6290c5;
}
.group .on .ic {
  stroke: #fff;
}
.group .on .solid {
  fill: #fff;
  stroke: none;
}
.watermark {
  position: absolute;
  right: 10px;
  top: 1px;
  color: rgba(225, 225, 225, 0.8);
  font-family: "Noto Sans CJK SC", sans-serif;
  font-size: 20px;
  line-height: 26px;
  white-space: nowrap;
  pointer-events: none;
}
```
